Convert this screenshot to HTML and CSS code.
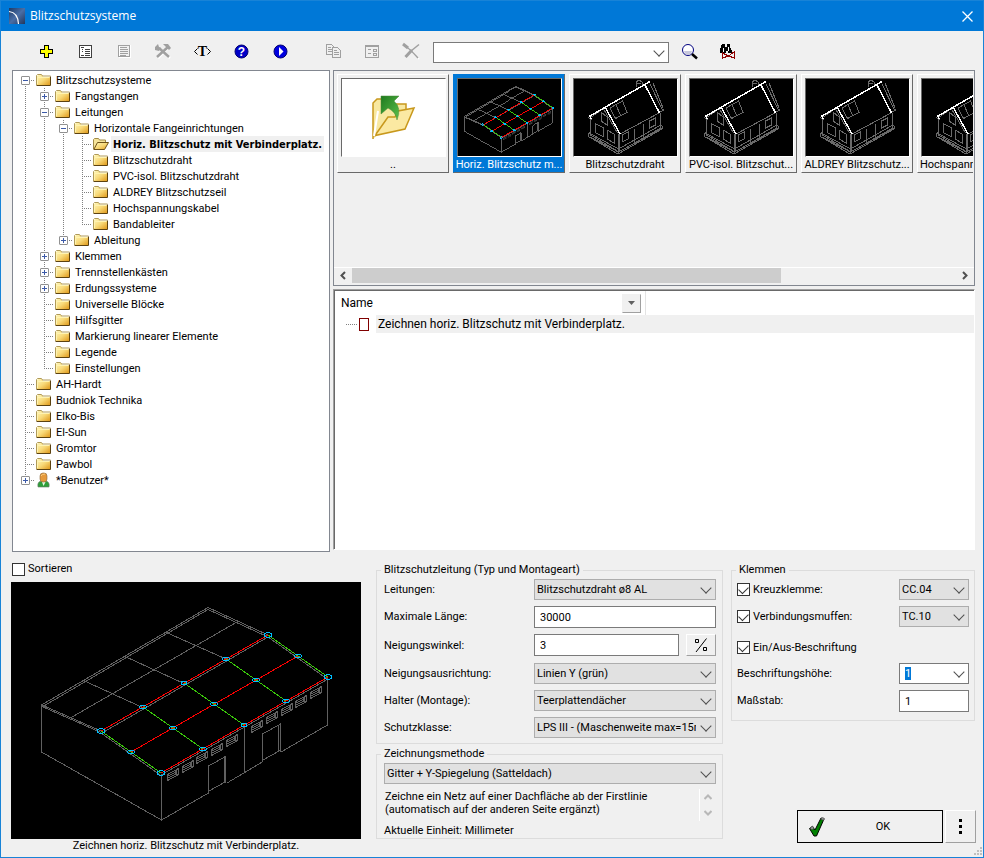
FILE: index.html
```html
<!DOCTYPE html>
<html lang="de">
<head>
  <meta charset="UTF-8">
  <title>Blitzschutzsysteme</title>
  <meta name="viewport" content="width=device-width, initial-scale=1.0">
  <link rel="stylesheet" href="styles.css">
</head>
<body>
  <!-- Shared drawings -->
  <svg class="defs" width="0" height="0" aria-hidden="true">
    <defs>
      <linearGradient id="folderFill" x1="0" y1="0" x2="1" y2="1">
        <stop offset="0" stop-color="#fff6b8"/>
        <stop offset="0.5" stop-color="#f8d978"/>
        <stop offset="1" stop-color="#e09a1c"/>
      </linearGradient>
      <linearGradient id="arrowFill" x1="0" y1="0" x2="1" y2="1">
        <stop offset="0" stop-color="#1f7a1f"/>
        <stop offset="1" stop-color="#5cc04a"/>
      </linearGradient>
      <linearGradient id="logoFill" x1="0" y1="0" x2="1" y2="1">
        <stop offset="0" stop-color="#1d3a66"/>
        <stop offset="0.5" stop-color="#4a6ea5"/>
        <stop offset="1" stop-color="#22365c"/>
      </linearGradient>
    </defs>
    <symbol id="folder" viewBox="0 0 16 16">
      <path d="M1 13V4l1-1h4l1 1v1h7v8z" fill="url(#folderFill)"/>
      <path d="M.5 13V3.500L1.500 2.500h4l1 1.500h8" fill="none" stroke="#b09a58"/>
      <path d="M1.500 12V5.500h12" fill="none" stroke="#fff3b0"/>
      <path d="M.5 13.500h14V4.500" fill="none" stroke="#5c4210"/>
    </symbol>
    <symbol id="folderOpen" viewBox="0 0 16 16">
      <path d="M.5 13V3.500l1-1h4l1 1.500h6v2.500" fill="#f6e49a" stroke="#a08a48"/>
      <path d="M.8 13.500L4.500 6.500h11L11.500 13.500z" fill="url(#folderFill)" stroke="#6e5218"/>
    </symbol>
    <symbol id="user" viewBox="0 0 16 16">
      <path d="M2 15q-1-5 3-6h5q4 1 3 6z" fill="#2f9e3a" stroke="#6c7a6c" stroke-width=".6"/>
      <path d="M6 10l1.500 4l2-4z" fill="#e8f5e0"/>
      <rect x="4" y="1" width="7" height="9" rx="3" fill="#e69a3c" stroke="#8a6a40" stroke-width=".6"/>
      <path d="M5 4q1-2 4-2" stroke="#f8cc80" fill="none"/>
    </symbol>
    <symbol id="vent" viewBox="0 0 12 13">
      <path d="M.5 6.500l11-6v6l-11 6zM.5 8.500l9-5M.5 10.500l9-5M9.500 1.500v6"/>
    </symbol>
    <!-- Hall with the lightning protection grid on its roof -->
    <symbol id="hall" viewBox="0 0 350 257">
      <g class="wire" stroke="#606060">
        <path d="M30.500 123L197 25.500L257 53M32 124.500L197 27.500L256 54.500M31 123l59 26M31 124.500l59 26"/>
        <path d="M72.500 98.500l59 27M114 74.500l59 27M155.500 50.500l59.500 26.500M61 135L226 40"/>
        <path d="M30.500 123v47L150.500 238v-46M150.500 238l47-27M197.500 184v27.500M197.500 184l17-9.500v26M213 176v25M198 209l17-9.500M216 201l36-21.500M233.500 143v47M251.500 152v28M251.500 152l18-10v28M267.500 143v27M252 178l17-9.500M270 170L316.500 143V95"/>
        <path d="M91 151L257 55M90 151l60 42.500M257 55l60 42.500M150 193L317 97"/>
        <use href="#vent" x="156" y="186" width="12" height="13"/>
        <use href="#vent" x="171" y="178" width="12" height="13"/>
        <use href="#vent" x="185" y="169" width="12" height="13"/>
        <use href="#vent" x="200" y="161" width="12" height="13"/>
        <use href="#vent" x="215" y="152" width="12" height="13"/>
        <use href="#vent" x="240" y="138" width="12" height="13"/>
        <use href="#vent" x="255" y="129" width="12" height="13"/>
        <use href="#vent" x="270" y="121" width="12" height="13"/>
        <use href="#vent" x="284" y="113" width="12" height="13"/>
        <use href="#vent" x="299" y="104" width="12" height="13"/>
      </g>
      <path class="wire" stroke="#f00" d="M90 149L257 53M120 170L287 74M150 191L317 95"/>
      <path class="wire" stroke="#3ac80a" d="M90 149l60 42M132 125l60 42M173 101l60 42M215 77l60 42M257 53l60 42"/>
      <g class="wire" stroke="#00bfff">
        <ellipse cx="257" cy="53" rx="3.500" ry="2.500"/><ellipse cx="215" cy="77" rx="3.500" ry="2"/><ellipse cx="173" cy="101" rx="3" ry="2"/><ellipse cx="132" cy="125" rx="3.500" ry="2"/><ellipse cx="90" cy="149" rx="3.500" ry="2.500"/>
        <ellipse cx="287" cy="74" rx="3.500" ry="2"/><ellipse cx="245" cy="98" rx="3.500" ry="2"/><ellipse cx="203" cy="122" rx="3.500" ry="2"/><ellipse cx="162" cy="146" rx="3.500" ry="2"/><ellipse cx="120" cy="170" rx="3.500" ry="2"/>
        <ellipse cx="317" cy="95" rx="3.500" ry="2.500"/><ellipse cx="275" cy="119" rx="3.500" ry="2"/><ellipse cx="233" cy="143" rx="3" ry="2"/><ellipse cx="192" cy="167" rx="3.500" ry="2"/><ellipse cx="150" cy="191" rx="3.500" ry="2.500"/>
      </g>
    </symbol>
    <!-- Small house with a wire along the ridge -->
    <symbol id="house" viewBox="0 0 103 77">
      <g class="wire" stroke="#6a6a6a">
        <path d="M16.500 40v16L44 72.500v-18M45.500 54v18.500L86 49.500V34M46 55L86 33.500M14.500 57.500L44 75L88 50v-3l-3-1M14.500 57.500v-3l2-1M17 55L44.500 70L86 46.500M16 58l28.500 15L88 49"/>
        <path d="M14 38.500l4 2M30 29l-12.500 9M29 29l14.500 25M27 33v9l6 4v-8zM21 44.500l8 4v9l-8-4zM33 51l7 4v9l-7-4z"/>
        <path d="M36 29l12.500-7l4.500 11.500l-11.500 6zM42 26l5 11M48 56l6-3v7l-6 3zM60.500 50v14M69.500 45v14M75.500 42l6-3v7l-6 3z"/>
        <path d="M62 8V3l3-2l3 2v3M63 4h4M76 5l12 25l2 1l-4 2M79 4l10 25"/>
      </g>
      <path class="ridge" d="M17 40l-1-3L76 2.500M31 28L46 55M71 6L85.500 34"/>
    </symbol>
  </svg>

  <div class="window">
    <header class="titlebar">
      <svg width="16" height="16" viewBox="0 0 16 16"><rect width="16" height="16" fill="url(#logoFill)"/><path d="M0 3.500q9 1 9.500 12.500" fill="none" stroke="#fff" stroke-width="1.200"/></svg>
      <h1>Blitzschutzsysteme</h1>
      <button class="close" aria-label="Schließen"><svg width="11" height="11" viewBox="0 0 11 11"><path d="M.5.5l10 10M10.500.5l-10 10" stroke="#fff" stroke-width="1.300" fill="none"/></svg></button>
    </header>

    <div class="toolbar">
      <button aria-label="Hinzufügen"><svg width="24" height="24" viewBox="0 0 24 24" shape-rendering="crispEdges"><path d="M10.500 6.500h4v4h4v4h-4v4h-4v-4h-4v-4h4z" fill="#ff0" stroke="#000"/></svg></button>
      <button aria-label="Eigenschaften"><svg width="24" height="24" viewBox="0 0 24 24" shape-rendering="crispEdges"><path d="M6.500 6.500h12v12h-12z" fill="#fff" stroke="#404040"/><path d="M8 8.500h3M12 10.500h5M9 10.500h1M12 12.500h5M9 12.500h1M12 14.500h5M8 16.500h3M12 16.500h5" stroke="#404040"/></svg></button>
      <button aria-label="Liste" disabled><svg width="24" height="24" viewBox="0 0 24 24" shape-rendering="crispEdges"><path d="M7.500 6.500h11v12h-11z" fill="#f0f0f0" stroke="#fff"/><path d="M6.500 6.500h11v11h-11zM8 8.500h7M8 10.500h8M8 12.500h8M8 14.500h8M8 16.500h6" fill="none" stroke="#a0a0a0"/></svg></button>
      <button aria-label="Werkzeuge" disabled><svg width="24" height="24" viewBox="0 0 24 24"><path d="M7 19L17 9M9 10l10 9" stroke="#fff" stroke-width="2.500"/><path d="M6 18L17 8M8 9l10 9" stroke="#a0a0a0" stroke-width="2.500"/><path d="M4 8l3-3l1 3l2 1l-2 3l-4-1zM12 5h5l3 4l-2 2l-4-4z" fill="#a0a0a0"/></svg></button>
      <button class="text-tool" aria-label="Text"><svg width="24" height="24" viewBox="0 0 24 24"><path d="M7.500 9.500L4.500 12.500l3 3M17.500 9.500l3 3l-3 3" fill="none" stroke="#000"/><text x="12.500" y="17">T</text></svg></button>
      <button class="help-tool" aria-label="Hilfe"><svg width="24" height="24" viewBox="0 0 24 24"><circle cx="12.500" cy="12.500" r="6.500" fill="#0000c8" stroke="#000070"/><text x="12.500" y="17">?</text></svg></button>
      <button aria-label="Abspielen"><svg width="24" height="24" viewBox="0 0 24 24"><circle cx="12.500" cy="12.500" r="6.500" fill="#0000e0" stroke="#000070"/><path d="M11 8l4.500 4.500l-4.500 4.500z" fill="#fff"/></svg></button>
      <button class="group-start" aria-label="Kopieren" disabled><svg width="24" height="24" viewBox="0 0 24 24" shape-rendering="crispEdges"><g fill="#f0f0f0" stroke="#a0a0a0"><path d="M5.500 5.500h5l2 2v8h-7z"/><path d="M11.500 8.500h5l3 3v7h-8z"/><path d="M7 8.500h3M7 10.500h4M7 12.500h4M13 11.500h3M13 13.500h5M13 15.500h5"/></g></svg></button>
      <button aria-label="Formular" disabled><svg width="24" height="24" viewBox="0 0 24 24" shape-rendering="crispEdges"><path d="M5.500 6.500h13v12h-13zM5 7.500h14M8 10.500h3M8 14.500h3M13.500 10.500h3v2h-3zM13.500 14.500h3v2h-3z" fill="none" stroke="#a0a0a0"/></svg></button>
      <button aria-label="Löschen" disabled><svg width="24" height="24" viewBox="0 0 24 24"><path d="M6 7q6 4 14 13" stroke="#fff" stroke-width="1.500" fill="none"/><path d="M5 6q6 4 14 13M20 5.500L12 12" stroke="#a0a0a0" stroke-width="1.500" fill="none"/><path d="M13 11l-6.500 7M4 5l5 4" stroke="#a0a0a0" stroke-width="3"/></svg></button>
      <span class="combo search"><input type="text" aria-label="Suche"></span>
      <button aria-label="Suchen"><svg width="24" height="24" viewBox="0 0 24 24"><circle cx="11" cy="11" r="5.500" fill="#fff" stroke="#000080"/><path d="M7 12h8q-1 4-4 4t-4-4z" fill="#c8c8dc"/><path d="M15 15l5 4.500" stroke="#000" stroke-width="2.500"/></svg></button>
      <button aria-label="Suche löschen"><svg width="24" height="24" viewBox="0 0 24 24" shape-rendering="crispEdges"><path d="M6 5h3v3h2V5h3v3l2 4v2h-4v-2h-2v2H4v-3z" fill="#000"/><path d="M7.500 9v4M12.500 8v4" stroke="#fff"/><path d="M6.500 19v-5l6 3l6-4.500V19l-6-2z" fill="none" stroke="#900000"/></svg></button>
    </div>

    <main class="browser">
      <ul class="tree">
        <li>
          <div class="node"><button class="toggle" aria-label="Zuklappen"></button><svg><use href="#folder"/></svg><span>Blitzschutzsysteme</span></div>
          <ul>
            <li><div class="node"><button class="toggle plus" aria-label="Aufklappen"></button><svg><use href="#folder"/></svg><span>Fangstangen</span></div></li>
            <li>
              <div class="node"><button class="toggle" aria-label="Zuklappen"></button><svg><use href="#folder"/></svg><span>Leitungen</span></div>
              <ul>
                <li>
                  <div class="node"><button class="toggle" aria-label="Zuklappen"></button><svg><use href="#folder"/></svg><span>Horizontale Fangeinrichtungen</span></div>
                  <ul>
                    <li><div class="node leaf selected"><svg><use href="#folderOpen"/></svg><span>Horiz. Blitzschutz mit Verbinderplatz.</span></div></li>
                    <li><div class="node leaf"><svg><use href="#folder"/></svg><span>Blitzschutzdraht</span></div></li>
                    <li><div class="node leaf"><svg><use href="#folder"/></svg><span>PVC-isol. Blitzschutzdraht</span></div></li>
                    <li><div class="node leaf"><svg><use href="#folder"/></svg><span>ALDREY Blitzschutzseil</span></div></li>
                    <li><div class="node leaf"><svg><use href="#folder"/></svg><span>Hochspannungskabel</span></div></li>
                    <li><div class="node leaf"><svg><use href="#folder"/></svg><span>Bandableiter</span></div></li>
                  </ul>
                </li>
                <li><div class="node"><button class="toggle plus" aria-label="Aufklappen"></button><svg><use href="#folder"/></svg><span>Ableitung</span></div></li>
              </ul>
            </li>
            <li><div class="node"><button class="toggle plus" aria-label="Aufklappen"></button><svg><use href="#folder"/></svg><span>Klemmen</span></div></li>
            <li><div class="node"><button class="toggle plus" aria-label="Aufklappen"></button><svg><use href="#folder"/></svg><span>Trennstellenkästen</span></div></li>
            <li><div class="node"><button class="toggle plus" aria-label="Aufklappen"></button><svg><use href="#folder"/></svg><span>Erdungssysteme</span></div></li>
            <li><div class="node leaf"><svg><use href="#folder"/></svg><span>Universelle Blöcke</span></div></li>
            <li><div class="node leaf"><svg><use href="#folder"/></svg><span>Hilfsgitter</span></div></li>
            <li><div class="node leaf"><svg><use href="#folder"/></svg><span>Markierung linearer Elemente</span></div></li>
            <li><div class="node leaf"><svg><use href="#folder"/></svg><span>Legende</span></div></li>
            <li><div class="node leaf"><svg><use href="#folder"/></svg><span>Einstellungen</span></div></li>
          </ul>
        </li>
        <li><div class="node leaf"><svg><use href="#folder"/></svg><span>AH-Hardt</span></div></li>
        <li><div class="node leaf"><svg><use href="#folder"/></svg><span>Budniok Technika</span></div></li>
        <li><div class="node leaf"><svg><use href="#folder"/></svg><span>Elko-Bis</span></div></li>
        <li><div class="node leaf"><svg><use href="#folder"/></svg><span>El-Sun</span></div></li>
        <li><div class="node leaf"><svg><use href="#folder"/></svg><span>Gromtor</span></div></li>
        <li><div class="node leaf"><svg><use href="#folder"/></svg><span>Pawbol</span></div></li>
        <li><div class="node"><button class="toggle plus" aria-label="Aufklappen"></button><svg><use href="#user"/></svg><span>*Benutzer*</span></div></li>
      </ul>

      <div class="content">
        <section class="gallery">
          <div class="tiles">
            <button class="tile up">
              <svg viewBox="0 0 103 77"><path d="M31 60V24l4-4h10l3 5h16v6" fill="#f8e8a0" stroke="#c8981c" stroke-width="1.500"/><path d="M33 56.500L46 38h7l3-6l16-3L63 50z" fill="#fbe9a2" stroke="#c8981c" stroke-width="1.500"/><path d="M32 57L36 32" stroke="#fff" stroke-width="2"/><path d="M39 17h18l-5 5q8 7 3 19q-1-8-9-12l-7 6z" fill="url(#arrowFill)" stroke="#4a8a3a" stroke-width=".5"/></svg>
              <span>..</span>
            </button>
            <button class="tile active"><svg viewBox="11 2 332 248"><use href="#hall" width="350" height="257"/></svg><span>Horiz. Blitzschutz m...</span></button>
            <button class="tile"><svg viewBox="0 0 103 77"><use href="#house"/></svg><span>Blitzschutzdraht</span></button>
            <button class="tile"><svg viewBox="0 0 103 77"><use href="#house"/></svg><span>PVC-isol. Blitzschut...</span></button>
            <button class="tile"><svg viewBox="0 0 103 77"><use href="#house"/></svg><span>ALDREY Blitzschutz...</span></button>
            <button class="tile"><svg viewBox="0 0 103 77"><use href="#house"/></svg><span>Hochspannungskabel</span></button>
          </div>
          <div class="scrollbar">
            <button aria-label="Nach links"><svg width="8" height="9" viewBox="0 0 8 9"><path d="M6 1L2.500 4.500L6 8" fill="none" stroke="#505050" stroke-width="2"/></svg></button>
            <div class="track"><div class="thumb"></div></div>
            <button aria-label="Nach rechts"><svg width="8" height="9" viewBox="0 0 8 9"><path d="M2 1l3.500 3.500L2 8" fill="none" stroke="#505050" stroke-width="2"/></svg></button>
          </div>
        </section>

        <section class="list">
          <table>
            <thead>
              <tr><th class="name"><div>Name <button aria-label="Filter"><svg width="7" height="4" viewBox="0 0 7 4"><path d="M0 0h7L3.500 4z" fill="#606060"/></svg></button></div></th><th></th></tr>
            </thead>
            <tbody>
              <tr><td colspan="2"><div class="entry"><i class="stub"></i><i class="mark"></i><span>Zeichnen horiz. Blitzschutz mit Verbinderplatz.</span></div></td></tr>
            </tbody>
          </table>
        </section>
      </div>
    </main>

    <form class="settings">
      <div class="preview">
        <label class="check"><input type="checkbox"> Sortieren</label>
        <figure>
          <svg viewBox="0 0 350 257"><use href="#hall"/></svg>
          <figcaption>Zeichnen horiz. Blitzschutz mit Verbinderplatz.</figcaption>
        </figure>
      </div>

      <div class="groups">
        <fieldset class="line-type">
          <legend>Blitzschutzleitung (Typ und Montageart)</legend>
          <div class="field"><label for="leitungen">Leitungen:</label><span class="combo"><select id="leitungen"><option>Blitzschutzdraht ø8 AL</option></select></span></div>
          <div class="field"><label for="laenge">Maximale Länge:</label><input type="text" id="laenge" value="30000"></div>
          <div class="field"><label for="winkel">Neigungswinkel:</label><span class="with-button"><input type="text" id="winkel" value="3"><button type="button" class="raised" aria-label="Prozent"><svg width="14" height="16" viewBox="0 0 14 16"><path d="M12.500 1.500L2 15M1.500 2.500h3v3h-3zM9.500 10.500h3v3h-3z" fill="none" stroke="#000"/></svg></button></span></div>
          <div class="field"><label for="ausrichtung">Neigungsausrichtung:</label><span class="combo"><select id="ausrichtung"><option>Linien Y (grün)</option></select></span></div>
          <div class="field"><label for="halter">Halter (Montage):</label><span class="combo"><select id="halter"><option>Teerplattendächer</option></select></span></div>
          <div class="field"><label for="klasse">Schutzklasse:</label><span class="combo"><select id="klasse"><option>LPS III - (Maschenweite max=15m)</option></select></span></div>
        </fieldset>
        <fieldset class="method">
          <legend>Zeichnungsmethode</legend>
          <span class="combo"><select aria-label="Zeichnungsmethode"><option>Gitter + Y-Spiegelung (Satteldach)</option></select></span>
          <div class="description">
            <textarea readonly rows="2" aria-label="Beschreibung">Zeichne ein Netz auf einer Dachfläche ab der Firstlinie
(automatisch auf der anderen Seite ergänzt)</textarea>
            <div class="arrows">
              <svg width="8" height="6" viewBox="0 0 8 6"><path d="M.5 5L4 1.500L7.500 5" fill="none" stroke="#b8b8b8" stroke-width="2"/></svg>
              <svg width="8" height="6" viewBox="0 0 8 6"><path d="M.5 1L4 4.500L7.500 1" fill="none" stroke="#b8b8b8" stroke-width="2"/></svg>
            </div>
          </div>
          <p>Aktuelle Einheit: Millimeter</p>
        </fieldset>
      </div>

      <div class="side">
        <fieldset class="clamps">
          <legend>Klemmen</legend>
          <div class="field"><label class="check"><input type="checkbox" checked> Kreuzklemme:</label><span class="combo"><select aria-label="Kreuzklemme"><option>CC.04</option></select></span></div>
          <div class="field"><label class="check"><input type="checkbox" checked> Verbindungsmuffen:</label><span class="combo"><select aria-label="Verbindungsmuffen"><option>TC.10</option></select></span></div>
          <label class="check single"><input type="checkbox" checked> Ein/Aus-Beschriftung</label>
          <div class="field"><label for="hoehe">Beschriftungshöhe:</label><span class="combo"><input type="text" id="hoehe" value="1"></span></div>
          <div class="field"><label for="massstab">Maßstab:</label><input type="text" id="massstab" value="1"></div>
        </fieldset>
        <div class="actions">
          <button type="submit" class="ok">
            <svg width="18" height="22" viewBox="0 0 18 22"><path d="M1.500 12.500l3-2l2.500 3.500L13 2l3 1l-7.500 17H6z" fill="#008000" stroke="#000"/><path d="M12.500 3l2-1.500l2 1l-1 2zM2 12l2.500-2l1.500 2l-2 2z" fill="#909090" stroke="#404040" stroke-width=".6"/></svg>
            <span>OK</span>
          </button>
          <button type="button" class="raised more" aria-label="Mehr"><svg width="3" height="15" viewBox="0 0 3 15"><path d="M0 0h3v3H0zM0 6h3v3H0zM0 12h3v3H0z"/></svg></button>
        </div>
      </div>
    </form>
    <svg class="grip" width="8" height="8" viewBox="0 0 8 8"><path d="M6 0h2v2H6zM3 3h2v2H3zM6 3h2v2H6zM0 6h2v2H0zM3 6h2v2H3zM6 6h2v2H6z" fill="#bfbfbf"/></svg>
  </div>

  <script>
    const height = document.getElementById("hoehe");
    height.focus();
    height.select();
  </script>
</body>
</html>
```
FILE: styles.css
```css
/* Base */
* {
  box-sizing: border-box;
}
body {
  margin: 0;
  font: 11px/14px Roboto, Tahoma, sans-serif;
  color: #000;
  background: #f0f0f0;
}
button, input, select, textarea {
  font: inherit;
  color: inherit;
  margin: 0;
  padding: 0;
  border: 0;
  border-radius: 0;
  background: none;
  outline: none;
}
button {
  display: flex;
  align-items: center;
  justify-content: center;
}
ul {
  list-style: none;
  margin: 0;
  padding: 0;
}
.defs {
  position: absolute;
}
.window {
  position: relative;
  display: flex;
  flex-direction: column;
  min-height: 100vh;
  border: 1px solid #1883d7;
}
.wire {
  fill: none;
  stroke-width: 1px;
  shape-rendering: crispEdges;
  vector-effect: non-scaling-stroke;
}
.wire * {
  vector-effect: non-scaling-stroke;
}
.ridge {
  fill: none;
  stroke: #fff;
  stroke-width: 1.5px;
  shape-rendering: crispEdges;
}

/* Title bar */
.titlebar {
  display: flex;
  align-items: center;
  gap: 5px;
  height: 30px;
  padding: 0 10px 0 8px;
  background: #0078d7;
  color: #fff;
}
.titlebar h1 {
  flex: 1;
  margin: 0;
  font: 12px/16px "Open Sans", sans-serif;
}

/* Toolbar */
.toolbar {
  display: flex;
  align-items: center;
  height: 39px;
  padding: 1px 0 0 25px;
}
.toolbar button {
  width: 39px;
  height: 28px;
}
.toolbar .group-start {
  margin-left: 14px;
}
.toolbar .search {
  width: 236px;
  margin: 3px 0 0 3px;
}
.toolbar text {
  text-anchor: middle;
  font: bold 14px "Liberation Serif", serif;
}
.toolbar .help-tool text {
  font: bold 12px "Liberation Sans", sans-serif;
  fill: #fff;
}

/* Inputs */
input[type="text"], select {
  display: block;
  width: 100%;
  height: 22px;
  border: 1px solid #7a7a7a;
  background: #fff;
  padding: 0 5px;
}
select {
  appearance: none;
  height: 21px;
  border-color: #adadad;
  background: #e1e1e1;
  padding: 0 19px 0 2px;
}
.combo {
  position: relative;
  display: block;
}
.combo input[type="text"] {
  height: 21px;
}
.combo::after {
  content: "";
  position: absolute;
  right: 6px;
  top: 5px;
  width: 7px;
  height: 7px;
  border: solid #505050;
  border-width: 0 1px 1px 0;
  transform: rotate(45deg);
  pointer-events: none;
}
input::selection {
  background: #0078d7;
  color: #fff;
}
.check {
  display: flex;
  align-items: center;
  gap: 3px;
}
input[type="checkbox"] {
  appearance: none;
  display: flex;
  width: 13px;
  height: 13px;
  border: 1px solid #333;
  background: #fff;
}
input[type="checkbox"]:checked::after {
  content: "";
  width: 9px;
  height: 5px;
  margin: 2px 1px;
  border: solid #333;
  border-width: 0 0 1px 1px;
  transform: rotate(-45deg);
}
.raised {
  border: 1px solid;
  border-color: #fff #a0a0a0 #a0a0a0 #fff;
}

/* Tree */
.browser {
  flex: 1;
  display: grid;
  grid-template-columns: 318px minmax(0, 1fr);
  gap: 3px;
  padding: 0 8px 0 11px;
}
.tree {
  border: 1px solid #828790;
  background: #fff;
  padding-top: 1px;
}
.tree ul {
  padding-left: 19px;
}
.tree li {
  position: relative;
}
.tree li::before {
  content: "";
  position: absolute;
  left: 12px;
  top: 0;
  bottom: 0;
  width: 1px;
  background: repeating-linear-gradient(#808080 0 1px, #fff 1px 2px);
}
.tree li:last-child::before {
  bottom: auto;
  height: 8px;
}
.tree > li:first-child::before {
  top: 8px;
}
.node {
  position: relative;
  display: flex;
  align-items: center;
  height: 16px;
  padding-left: 8px;
  background: repeating-linear-gradient(90deg, #808080 0 1px, #fff 1px 2px) 12px 8px / 10px 1px no-repeat;
}
.node.leaf {
  padding-left: 23px;
}
.node svg {
  width: 16px;
  height: 16px;
}
.node span {
  padding: 2px 2px 0;
  margin-left: 2px;
}
.selected span {
  font-family: "DejaVu Sans Condensed", "DejaVu Sans", sans-serif;
  font-weight: bold;
  background: #f0f0f0;
}
.toggle {
  width: 9px;
  height: 9px;
  margin-right: 6px;
  border: 1px solid #919191;
  border-radius: 1px;
  background: linear-gradient(#3c5aa8, #3c5aa8) center / 5px 1px no-repeat, #fff;
}
.toggle.plus {
  background: linear-gradient(#3c5aa8, #3c5aa8) center / 5px 1px no-repeat, linear-gradient(#3c5aa8, #3c5aa8) center / 1px 5px no-repeat, #fff;
}

/* Gallery */
.content {
  display: flex;
  flex-direction: column;
  gap: 3px;
}
.gallery {
  display: flex;
  flex-direction: column;
  height: 216px;
  border: 1px solid #828790;
}
.tiles {
  flex: 1;
  display: flex;
  align-items: flex-start;
  gap: 4px;
  overflow: hidden;
  padding: 3px 0 0 3px;
  margin-right: 1px;
}
.tile {
  flex: none;
  flex-direction: column;
  justify-content: flex-start;
  width: 112px;
  height: 99px;
  padding: 3px 3px 0;
  border: 1px solid;
  border-color: #fff #696969 #696969 #fff;
}
.tile svg {
  flex: none;
  width: 105px;
  height: 79px;
  border: 1px solid;
  border-color: #696969 #fff #fff #696969;
  background: #000;
}
.tile.up svg {
  background: #fff;
}
.tile span {
  padding-top: 1px;
  white-space: nowrap;
}
.tile.active {
  background: #0078d7;
  border-color: #0078d7 #696969 #696969 #0078d7;
  color: #fff;
}
.scrollbar {
  display: flex;
  height: 18px;
  border-top: 1px solid #fff;
  padding-bottom: 2px;
}
.scrollbar button {
  width: 18px;
}
.track {
  flex: 1;
}
.thumb {
  width: 71%;
  height: 100%;
  background: #cdcdcd;
}

/* List */
.list {
  flex: 1;
  border: 1px solid;
  border-color: #a0a0a0 #fff #fff #a0a0a0;
  box-shadow: inset 1px 1px #696969;
  background: #fff;
  padding: 1px 0 0 1px;
  margin-bottom: 2px;
}
.list table {
  width: 100%;
  border-collapse: collapse;
  font: 12px/18px Roboto, Tahoma, sans-serif;
}
.list th, .list td {
  padding: 0;
  font-weight: normal;
  text-align: left;
}
.list .name {
  width: 310px;
  border-right: 1px solid #e3e3e3;
}
.list .name div {
  display: flex;
  align-items: center;
  justify-content: space-between;
  height: 24px;
  padding: 0 4px 0 6px;
}
.list .name button {
  width: 19px;
  height: 19px;
  border: 1px solid;
  border-color: #f0f0f0 #a0a0a0 #a0a0a0 #f0f0f0;
  background: #f0f0f0;
}
.entry {
  display: flex;
  align-items: center;
}
.stub {
  width: 12px;
  height: 1px;
  margin: 0 1px 0 11px;
  background: repeating-linear-gradient(90deg, #808080 0 1px, #fff 1px 2px);
}
.mark {
  width: 10px;
  height: 13px;
  margin-right: 7px;
  border: 1px solid #800000;
}
.entry span {
  flex: 1;
  padding-left: 2px;
  background: #f0f0f0;
}

/* Settings */
.settings {
  display: grid;
  grid-template-columns: 350px 347px minmax(0, 1fr);
  padding: 10px 8px 4px 10px;
}
.groups {
  padding-top: 1px;
  margin-left: 15px;
  margin-right: -15px;
}
.side {
  display: flex;
  flex-direction: column;
  justify-content: space-between;
  padding: 1px 0 10px;
  margin-left: 23px;
}
.preview .check {
  padding-left: 1px;
}
.preview figure {
  margin: 6px 0 0;
}
.preview figure svg {
  display: block;
  width: 100%;
  background: #000;
}
.preview figcaption {
  text-align: center;
}
fieldset {
  min-width: 0;
  margin: 0;
  padding: 2px 6px 5px 7px;
  border: 1px solid #dcdcdc;
}
legend {
  margin-left: -3px;
  padding: 0 3px;
}
.field {
  display: grid;
  grid-template-columns: minmax(0, 1fr) 182px;
  align-items: center;
}
.field + .field, .single + .field {
  margin-top: 6px;
}
.with-button {
  display: grid;
  grid-template-columns: minmax(0, 1fr) 30px;
  gap: 7px;
  padding-bottom: 1px;
}
.method {
  margin-top: 3px;
  padding-bottom: 0;
}
.description {
  display: flex;
  height: 32px;
  margin: 5px 0 3px;
}
.description textarea {
  flex: 1;
  resize: none;
  overflow: hidden;
  line-height: 13px;
  padding: 1px 0 0 1px;
  border-right: 1px solid #fff;
}
.arrows {
  display: flex;
  flex-direction: column;
  justify-content: space-around;
  align-items: center;
  width: 16px;
}
.method p {
  margin: 0;
}
.clamps {
  padding: 2px 5px 8px;
}
.clamps legend {
  margin-left: -1px;
}
.clamps .field {
  grid-template-columns: minmax(0, 1fr) 70px;
}
.single {
  height: 19px;
  margin-top: 11px;
}

/* Buttons */
.actions {
  display: flex;
  justify-content: flex-end;
  gap: 2px;
  margin-right: -1px;
}
.ok {
  width: 146px;
  height: 33px;
  padding: 0 10px;
  border: 1px solid #000;
}
.ok span {
  flex: 1;
  padding-left: 8px;
}
.more {
  width: 31px;
}
.grip {
  position: absolute;
  right: 1px;
  bottom: 2px;
}
```
